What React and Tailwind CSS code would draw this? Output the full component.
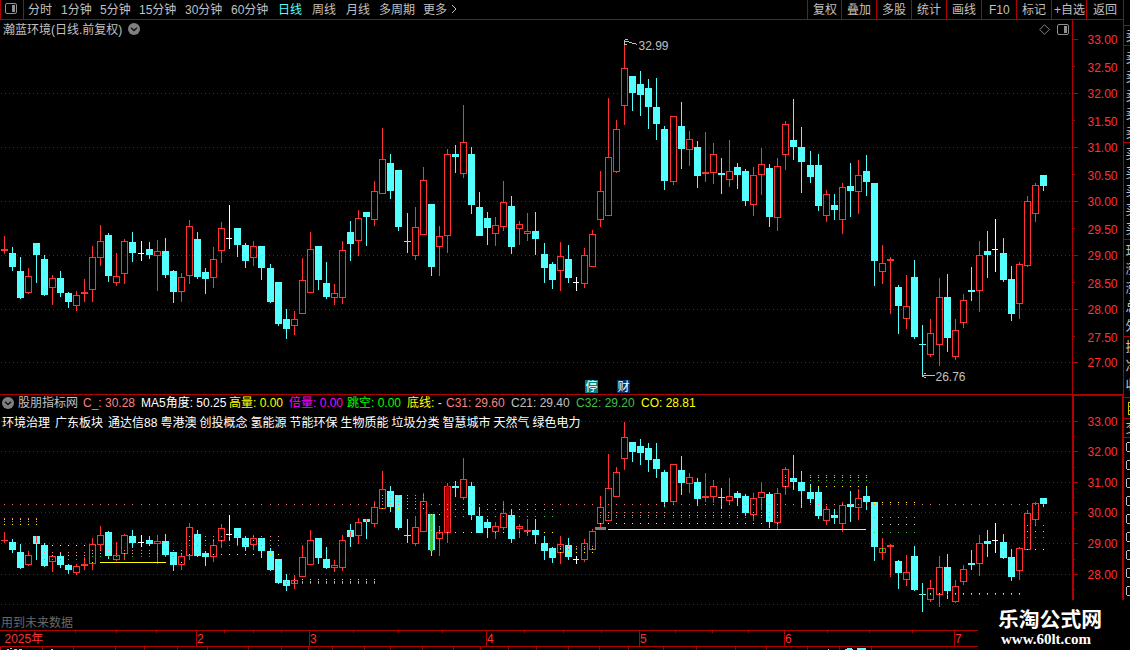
import React from "react";

const RED = "#ff3232";
const CYAN = "#54ffff";
const FRAME = "#b00000";
const GRID = "#8c1010";
const GREY = "#c0c0c0";

// [x centre, kind (r rising, c falling, w unchanged), high, body top, body bottom, low]
const CANDLES = [
  [4, "r", 236, 249, 251, 254], [12, "c", 247, 253, 267, 271], [20, "c", 257, 271, 298, 299],
  [28, "r", 268, 276, 293, 294], [36, "c", 243, 243, 255, 283], [44, "c", 255, 259, 295, 296],
  [52, "r", 275, 278, 288, 305], [60, "c", 271, 278, 293, 297], [68, "c", 292, 293, 302, 308],
  [76, "r", 291, 295, 306, 311], [84, "r", 279, 292, 294, 302], [92, "r", 246, 257, 290, 302],
  [100, "r", 225, 241, 258, 266], [108, "c", 233, 235, 276, 282], [116, "r", 253, 276, 283, 286],
  [124, "r", 239, 241, 274, 284], [132, "c", 232, 242, 253, 262], [141, "w", 241, 253, 254, 261],
  [149, "c", 242, 249, 255, 259], [157, "r", 240, 251, 256, 291], [165, "c", 238, 251, 275, 278],
  [173, "c", 270, 271, 292, 303], [181, "r", 273, 277, 292, 302], [189, "r", 220, 226, 276, 284],
  [197, "c", 232, 239, 277, 279], [205, "c", 268, 272, 279, 294], [213, "r", 247, 259, 278, 288],
  [221, "r", 222, 228, 251, 263], [229, "w", 205, 238, 239, 249], [237, "c", 228, 228, 245, 257],
  [245, "c", 243, 245, 261, 268], [253, "r", 241, 246, 258, 266], [261, "c", 246, 246, 268, 280],
  [270, "c", 264, 268, 302, 303], [278, "c", 282, 282, 324, 326], [286, "c", 309, 319, 329, 339],
  [294, "r", 311, 319, 326, 335], [302, "r", 258, 280, 314, 314], [310, "r", 232, 249, 293, 293],
  [318, "c", 246, 246, 280, 290], [326, "c", 262, 283, 297, 299], [334, "r", 284, 293, 298, 305],
  [342, "r", 241, 250, 298, 304], [350, "c", 221, 232, 244, 261], [358, "r", 210, 218, 241, 256],
  [366, "c", 212, 212, 217, 246], [374, "r", 181, 191, 220, 226], [382, "r", 128, 159, 194, 194],
  [390, "c", 154, 163, 191, 199], [398, "c", 170, 170, 227, 231], [407, "c", 213, 241, 242, 253],
  [415, "r", 207, 227, 256, 260], [423, "r", 167, 180, 235, 235], [431, "c", 204, 204, 267, 276],
  [439, "r", 226, 236, 247, 276], [447, "r", 149, 154, 236, 253], [455, "c", 145, 154, 157, 173],
  [463, "r", 105, 142, 174, 178], [471, "c", 147, 154, 205, 214], [479, "c", 192, 207, 236, 236],
  [487, "c", 212, 218, 228, 245], [495, "r", 217, 225, 234, 246], [503, "r", 181, 202, 227, 231],
  [511, "c", 196, 206, 247, 254], [519, "r", 221, 224, 229, 245], [527, "r", 213, 231, 234, 241],
  [535, "c", 212, 231, 239, 255], [544, "c", 243, 254, 268, 283], [552, "c", 262, 264, 280, 289],
  [560, "r", 242, 256, 271, 291], [568, "c", 245, 259, 278, 283], [576, "w", 277, 282, 283, 291],
  [584, "r", 248, 255, 284, 288], [592, "r", 230, 234, 267, 267], [600, "r", 171, 191, 220, 227],
  [608, "r", 98, 157, 216, 216], [616, "r", 120, 129, 172, 173], [624, "r", 41, 68, 106, 125],
  [632, "c", 76, 76, 93, 111], [640, "c", 71, 84, 95, 116], [648, "c", 79, 88, 107, 129],
  [656, "c", 78, 107, 124, 140], [664, "c", 126, 129, 181, 190], [673, "r", 116, 116, 182, 185],
  [681, "c", 102, 126, 149, 169], [689, "r", 131, 139, 150, 166], [697, "c", 141, 147, 176, 188],
  [705, "r", 132, 172, 174, 182], [713, "r", 143, 154, 173, 184], [721, "c", 158, 173, 175, 194],
  [729, "r", 140, 171, 180, 187], [737, "c", 163, 167, 175, 189], [745, "c", 169, 171, 201, 206],
  [753, "r", 167, 175, 205, 216], [761, "r", 148, 164, 175, 195], [769, "c", 164, 168, 217, 227],
  [777, "r", 158, 166, 218, 231], [785, "r", 121, 124, 155, 170], [793, "c", 99, 140, 147, 160],
  [801, "c", 127, 147, 162, 193], [810, "c", 151, 165, 177, 183], [818, "c", 154, 165, 206, 211],
  [826, "r", 190, 194, 216, 222], [834, "c", 194, 205, 210, 220], [842, "r", 183, 187, 220, 234],
  [850, "c", 163, 186, 191, 217], [858, "r", 160, 175, 192, 214], [866, "c", 155, 171, 182, 196],
  [874, "c", 183, 183, 261, 286], [882, "r", 245, 263, 272, 284], [890, "r", 257, 259, 261, 314],
  [898, "c", 285, 287, 306, 334], [906, "r", 275, 306, 319, 329], [914, "c", 260, 277, 337, 339],
  [922, "c", 325, 344, 345, 375], [930, "r", 319, 333, 355, 357], [939, "r", 278, 297, 345, 366],
  [947, "c", 274, 297, 338, 352], [955, "r", 319, 330, 357, 360], [963, "r", 294, 300, 323, 328],
  [971, "c", 267, 290, 292, 301], [979, "r", 241, 255, 291, 312], [987, "c", 231, 251, 255, 278],
  [995, "w", 219, 249, 250, 272], [1003, "c", 238, 253, 280, 282], [1011, "c", 266, 279, 314, 321],
  [1019, "r", 262, 264, 304, 319], [1027, "r", 196, 201, 266, 267], [1035, "r", 183, 185, 214, 222],
  [1043, "c", 175, 175, 186, 191],
];

const toLower = (y) => Math.round(437 + (y - 68) * 0.568);
const LOWER = CANDLES.map(([x, k, h, t, b, l]) => [
  x, k, toLower(h), toLower(t), toLower(b - 1) + 1, toLower(l - 1) + 1,
]);

function Candle({ d }) {
  const [x, kind, high, top, bottom, low] = d;
  const color = kind === "r" ? RED : kind === "c" ? CYAN : "#ffffff";
  const hollow = kind === "r" && bottom - top > 2;
  const bodyW = kind === "w" ? 6 : 7;
  return (
    <g fill={color}>
      {hollow ? (
        <>
          {top > high && <rect x={x} y={high} width="1" height={top - high} />}
          {low > bottom && <rect x={x} y={bottom} width="1" height={low - bottom} />}
          <rect x={x - 2.5} y={top + 0.5} width="6" height={bottom - top - 1} fill="none" stroke={color} />
        </>
      ) : (
        <>
          <rect x={x} y={high} width="1" height={low - high} />
          <rect x={x - 3} y={top} width={bodyW} height={Math.max(1, bottom - top)} />
        </>
      )}
    </g>
  );
}

function GridLines({ rows }) {
  return rows.map((y) => (
    <line key={y} x1="1" x2="1071" y1={y + 0.5} y2={y + 0.5} stroke={GRID} strokeDasharray="1 3" />
  ));
}

const PINK = "#ff8080";
const GREEN = "#40c040";
const YELLOW = "#ffff00";
// [first x, last x, pink y, grey y, green y, yellow y]
const LEVELS = [
  [4, 36, 518, 519, 521, 524], [44, 84, 552, 555, 559, 545], [92, 181, 550, 553, 556, 562],
  [189, 278, 536, 540, 545, 554], [286, 374, 581, 582, 583, 579], [382, 423, 495, 498, 501, 508],
  [431, 439, 526, 530, 533, 514], [447, 552, 504, 509, 516, 532], [560, 592, 546, 548, 549, 552],
  [600, 777, 512, 515, 517, 523], [785, 866, 475, 477, 480, 486], [874, 914, 517, 524, 532, 502],
  [922, 1019, 593, 593, 594, 593], [1027, 1043, 525, 531, 537, 549],
];

function LevelDots() {
  const out = [];
  CANDLES.forEach(([x]) => {
    out.push(<rect key={"p" + x} x={x} y="504" width="1" height="1" fill={PINK} />);
    const g = LEVELS.find((l) => x >= l[0] && x <= l[1]);
    if (!g) return;
    [PINK, GREY, GREEN, YELLOW].forEach((c, i) =>
      out.push(<rect key={x + "-" + i} x={x} y={g[i + 2]} width="1" height="1" fill={c} />)
    );
  });
  return out;
}

function UpperChart() {
  return (
    <svg className="block" width="1072" height="356" viewBox="0 38 1072 356" shapeRendering="crispEdges">
      <GridLines rows={[93, 147, 201, 255, 309, 362]} />
      {CANDLES.map((d) => <Candle key={d[0]} d={d} />)}
      <g stroke={GREY} fill="none">
        <path d="M625 41.5H629M629 42.5H632M632 43.5H636M636 44.5H637M624.5 40V45M625 39.5H628M625 44.5H627" />
        <path d="M923 375.5H935M922.5 374V377M924 373.5H926M924 377.5H926M923 376.5H924" />
      </g>
      <g fill={GREY} fontSize="12">
        <text x="638.5" y="50">32.99</text>
        <text x="935.5" y="381">26.76</text>
      </g>
      <rect x="585" y="380" width="13" height="13" fill="#008080" />
      <rect x="617" y="380" width="13" height="13" fill="#003366" />
      <g fill="#ffffff" fontSize="12">
        <text x="585.5" y="391">停</text>
        <text x="617.5" y="391">财</text>
      </g>
    </svg>
  );
}

function LowerChart() {
  return (
    <svg className="block" width="1072" height="218" viewBox="0 412 1072 218" shapeRendering="crispEdges">
      <GridLines rows={[421, 451, 482, 512, 543, 574, 604]} />
      {LOWER.map((d) => <Candle key={d[0]} d={d} />)}
      <rect x="36" y="536" width="1" height="7" fill={RED} />
      <rect x="350" y="531" width="1" height="6" fill={RED} />
      <rect x="366" y="519" width="1" height="3" fill={RED} />
      <rect x="430" y="514" width="3" height="37" fill={GREEN} />
      <rect x="446" y="486" width="3" height="46" fill="#c00000" />
      <rect x="882" y="548" width="1" height="4" fill="#00ff00" />
      <LevelDots />
      <rect x="100" y="562" width="66" height="1" fill={YELLOW} />
      <rect x="608" y="529" width="258" height="1" fill={YELLOW} />
      <rect x="595" y="527" width="11" height="3" fill="#808080" />
    </svg>
  );
}

const UPPER_LABELS = [
  ["33.00", 39, 44], ["32.50", 66, 72], ["32.00", 93, 98], ["31.50", 120, 126], ["31.00", 147, 152],
  ["30.50", 174, 180], ["30.00", 201, 206], ["29.50", 228, 234], ["29.00", 255, 260],
  ["28.50", 282, 288], ["28.00", 309, 314], ["27.50", 336, 342], ["27.00", 362, 367],
];
const LOWER_LABELS = [
  ["33.00", 421, 426], ["32.00", 451, 456], ["31.00", 482, 487],
  ["30.00", 512, 517], ["29.00", 543, 548], ["28.00", 574, 579],
];

function Axis() {
  return (
    <svg className="block" width="51" height="580" viewBox="1072 20 51 580" shapeRendering="crispEdges">
      <g fill={FRAME}>
        <rect x="1072" y="20" width="1" height="375" />
        <rect x="1072" y="394" width="51" height="2" />
        <rect x="1072" y="394" width="2" height="206" />
        <rect x="1122" y="394" width="1" height="206" />
        {UPPER_LABELS.map(([t, y], i) => (
          <rect key={t} x="1073" y={y} width={i % 2 ? 2 : 5} height="1" />
        ))}
        {LOWER_LABELS.map(([t, y]) => <rect key={t} x="1074" y={y} width="4" height="1" />)}
        {[436, 467, 497, 528, 559, 589].map((y) => <rect key={y} x="1074" y={y} width="1" height="1" />)}
      </g>
      <g fill={RED} fontSize="12">
        {[...UPPER_LABELS, ...LOWER_LABELS].map(([t, , y]) => (
          <text key={t + y} x="1087.5" y={y} textLength="30">{t}</text>
        ))}
      </g>
    </svg>
  );
}

const SIDE = [
  ["卖", 40], ["卖", 62], ["卖", 81], ["卖", 100], ["卖", 118], ["卖", 137],
  ["买", 158], ["买", 177], ["买", 195], ["买", 214], ["买", 233],
  ["现", 255], ["涨", 273], ["涨", 292], ["总", 311], ["外", 330],
  ["换", 351], ["净", 370], ["收", 389], ["交", 432],
];

function SideStrip() {
  return (
    <svg className="block" width="7" height="600" viewBox="1123 0 7 600" shapeRendering="crispEdges">
      <rect x="1123" y="0" width="1" height="600" fill={FRAME} />
      {[25, 45, 142, 239, 336, 397, 418, 437].map((y) => (
        <rect key={y} x="1123" y={y} width="7" height="1" fill={FRAME} />
      ))}
      <g fill={GREY} fontSize="13">
        {SIDE.map(([t, y]) => <text key={y} x="1125.5" y={y}>{t}</text>)}
      </g>
      <path d="M1130 402.5H1128.5V415M1128 406.5H1130M1128 410.5H1130M1128 414.5H1130" fill="none" stroke="#c8c800" />
      {[442, 460, 478, 496, 514, 532, 550, 568, 586].map((y) => (
        <path key={y} d={`M1130 ${y + 0.5}H1127.5L1126.5 ${y + 1.5}V${y + 8.5}L1127.5 ${y + 9.5}H1130`} fill="none" stroke={GREY} />
      ))}
    </svg>
  );
}

const MONTHS = [["2", 196], ["3", 309], ["4", 486], ["5", 639], ["6", 784], ["7", 954]];
const WEEK_TICKS = [75, 116, 156, 224, 253, 281, 353, 398, 442, 524, 563, 601, 675, 712, 748, 827, 869, 912];
const TAB_TICKS = [
  0, 42, 73, 115, 144, 177, 207, 248, 281, 308, 332, 364, 390, 422, 453, 480, 508, 536, 568, 599,
  628, 663, 696, 735, 766, 807, 839, 871,
];

function TimeAxis() {
  return (
    <svg className="block" width="978" height="20" viewBox="0 630 978 20" shapeRendering="crispEdges">
      <g fill={FRAME}>
        <rect x="0" y="630" width="978" height="1" />
        <rect x="0" y="646" width="978" height="1" />
        {MONTHS.map(([m, x]) => <rect key={m} x={x} y="630" width="1" height="17" />)}
        {WEEK_TICKS.map((x) => <rect key={x} x={x} y="631" width="1" height="2" />)}
        {TAB_TICKS.map((x) => <rect key={x} x={x} y="647" width="1" height="3" />)}
      </g>
      <g fill={RED} fontSize="12">
        <text x="4.5" y="643">2025年</text>
        {MONTHS.map(([m, x]) => <text key={m} x={x + 1} y="643">{m}</text>)}
      </g>
      <path d="M7 649.5H9M10 648.5H12M14 649.5H17M19 649.5H22M51 649.5H53M828 649.5H829" stroke={GREY} />
      <path d="M847 648.5H852M857 648.5H866M845 649.5H853M857 649.5H866" stroke={CYAN} />
    </svg>
  );
}

function PanelIcon() {
  return (
    <svg width="12" height="11" viewBox="0 0 12 11" className="shrink-0">
      <rect x="0.5" y="0.5" width="11" height="10" rx="1.5" fill="none" stroke="#909090" />
      <rect x="7" y="2" width="3" height="7" fill="#909090" />
    </svg>
  );
}

function ChevronBadge() {
  return (
    <svg width="12" height="12" viewBox="0 0 12 12" className="shrink-0">
      <circle cx="6" cy="6" r="6" fill="#808080" />
      <path d="M3 4.8L6 7.6L9 4.8" fill="none" stroke="#101010" strokeWidth="1.4" />
    </svg>
  );
}

function TopBar() {
  return (
    <div className="flex h-5 w-[1123px] border-b border-[#b00000] text-[#c0c0c0]">
      <div className="flex w-6 items-center border-x border-[#b00000] pb-[2px] pl-1"><PanelIcon /></div>
      <div className="flex w-[783px] items-center pl-1">
        <span className="w-[33px]">分时</span>
        <span className="w-[39px]">1分钟</span>
        <span className="w-[39px]">5分钟</span>
        <span className="w-[46px]">15分钟</span>
        <span className="w-[46px]">30分钟</span>
        <span className="w-[47px]">60分钟</span>
        <span className="w-[34px] text-[#54ffff]">日线</span>
        <span className="w-[34px]">周线</span>
        <span className="w-[33px]">月线</span>
        <span className="w-11">多周期</span>
        <span className="w-7">更多</span>
        <svg width="6" height="10" viewBox="0 0 6 10" className="mb-[2px]"><path d="M1 1L5 5L1 9" fill="none" stroke="#c0c0c0" /></svg>
      </div>
      <div className="flex w-[34px] items-center border-l border-[#b00000] pl-[5px]">复权</div>
      <div className="flex w-[35px] items-center border-l border-[#b00000] pl-[5px]">叠加</div>
      <div className="flex w-[35px] items-center border-l border-[#b00000] pl-[5px]">多股</div>
      <div className="flex w-[35px] items-center border-l border-[#b00000] pl-[5px]">统计</div>
      <div className="flex w-[35px] items-center border-l border-[#b00000] pl-[5px]">画线</div>
      <div className="flex w-[35px] items-center border-l border-[#b00000] pl-[7px]">F10</div>
      <div className="flex w-[35px] items-center border-l border-[#b00000] pl-[5px]">标记</div>
      <div className="flex w-[35px] items-center border-l border-[#b00000] pl-[2px]">+自选</div>
      <div className="flex w-[37px] items-center border-l border-[#b00000] pl-[6px]">返回</div>
    </div>
  );
}

export default function App() {
  return (
    <div className="relative flex h-[650px] w-[1130px] flex-col overflow-hidden bg-black font-['Liberation_Sans','Noto_Sans_CJK_SC',sans-serif] text-[12px] leading-[18px] whitespace-nowrap">
      <div className="flex h-[630px]">
        <div className="flex w-[1123px] flex-col">
          <TopBar />
          <div className="flex">
            <div className="flex w-[1072px] flex-col">
              <div className="flex h-[18px] items-center pl-[3px] text-[#c0c0c0]">
                <span className="w-[125px] pt-[2px]">瀚蓝环境(日线.前复权)</span>
                <ChevronBadge />
                <svg className="ml-auto mr-[7px]" width="11" height="11" viewBox="0 0 11 11">
                  <path d="M5.5 0.7L10.3 5.5L5.5 10.3L0.7 5.5Z" fill="none" stroke="#808080" />
                </svg>
                <span className="mr-[3px] flex"><PanelIcon /></span>
              </div>
              <UpperChart />
              <div className="flex h-[18px] items-center border-t border-[#b00000] pb-[2px] pl-[2px]">
                <ChevronBadge />
                <span className="ml-1 w-[65px] text-[#c0c0c0]">股朋指标网</span>
                <span className="w-[58px] text-[#ff8080]">C_: 30.28</span>
                <span className="w-[88px] text-white">MA5角度: 50.25</span>
                <span className="w-[60px] text-[#ffff00]">高量: 0.00</span>
                <span className="w-[58px] text-[#ff00ff]">倍量: 0.00</span>
                <span className="w-[60px] text-[#00ff00]">跳空: 0.00</span>
                <span className="w-[39px] text-[#ffff00]">底线: -</span>
                <span className="w-[65px] text-[#ff8080]">C31: 29.60</span>
                <span className="w-[65px] text-[#c0c0c0]">C21: 29.40</span>
                <span className="w-[65px] text-[#40c040]">C32: 29.20</span>
                <span className="text-[#ffff00]">CO: 28.81</span>
              </div>
              <div className="relative">
                <LowerChart />
                <div className="absolute top-[2px] left-[2px] flex gap-[3px] text-white">
                  <span>环境治理</span>
                  <span className="ml-[2px]">广东板块</span>
                  <span className="ml-[2px]">通达信88</span>
                  <span>粤港澳</span>
                  <span>创投概念</span>
                  <span>氢能源</span>
                  <span>节能环保</span>
                  <span>生物质能</span>
                  <span>垃圾分类</span>
                  <span>智慧城市</span>
                  <span>天然气</span>
                  <span>绿色电力</span>
                </div>
                <div className="absolute bottom-[-2px] left-[1px] text-[#686868]">用到未来数据</div>
              </div>
            </div>
            <Axis />
          </div>
        </div>
        <SideStrip />
      </div>
      <TimeAxis />
      <div className="absolute right-0 bottom-0 flex h-[50px] w-[152px] flex-col bg-black pt-[7px] text-white">
        <div className="pl-5 text-[20.8px] leading-[25px] font-bold">乐淘公式网</div>
        <div className="pl-[23px] font-['Liberation_Serif',serif] text-[15px] leading-[15px] font-bold">www.60lt.com</div>
      </div>
    </div>
  );
}
